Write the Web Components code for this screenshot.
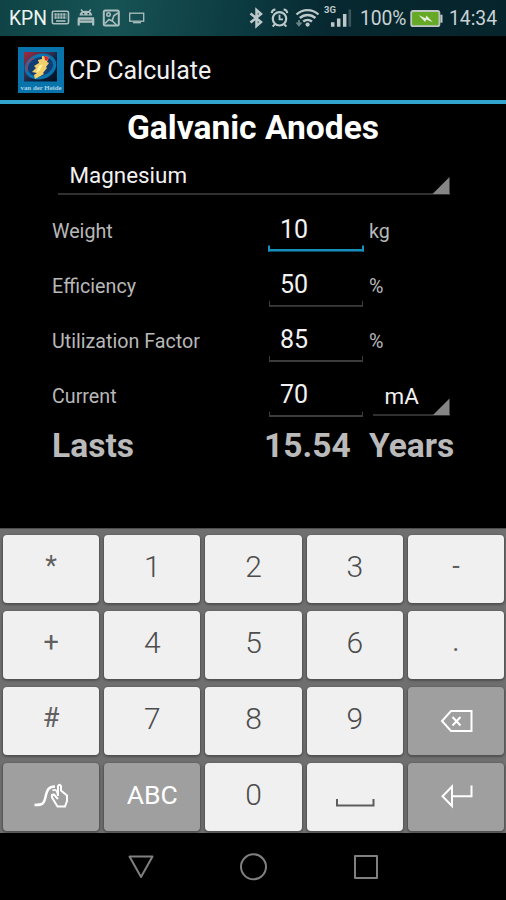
<!DOCTYPE html>
<html lang="en">
<head>
<meta charset="utf-8">
<title>CP Calculate</title>
<style>
    body {
        margin: 0;
        background-color: black;
        font-family: Roboto, "Liberation Sans", sans-serif;
    }
</style>
</head>
<body>
<calc-app></calc-app>

<script>
class StatusBar extends HTMLElement {
    constructor() {
        super();
        this.shadowDOM = this.attachShadow({mode: "open"});
    }

    connectedCallback() {
        this.shadowDOM.innerHTML = `
            <style>
                :host {
                    display: flex;
                    justify-content: space-between;
                    height: 36px;
                    line-height: 38px;
                    font-size: 19.3px;
                    color: #c9d2d4;
                    background: linear-gradient(100deg, #0f4345 0%, #175355 22%, #0c3a41 48%, #072830 65%, #06242b 100%);
                }

                div {
                    display: flex;
                }

                svg {
                    display: block;
                    height: 36px;
                }

                .left {
                    padding-left: 9px;
                }

                .right {
                    padding-right: 8px;
                }

                .carrier {
                    width: 41px;
                    color: #eef3f3;
                }

                .percent {
                    width: 49px;
                    letter-spacing: -.1px;
                }

                .clock {
                    width: 49px;
                }
            </style>

            <div class="left">
                <span class="carrier">KPN</span>
                <svg width="100" viewBox="50 0 100 36" fill="none" stroke="#aebfc0" stroke-width="1.6">
                    <rect x="52.3" y="11.3" width="16.2" height="12.4" rx="1.500"/>
                    <path d="M54.500 14.500h12M54.500 17.500h12" stroke-width="2.300" stroke-dasharray="2.200 .7"/>
                    <path d="M56 21h9.500" stroke-width="1.600"/>
                    <path d="M79.500 15.500q0-4.800 6.300-4.800t6.300 4.800z" fill="#aebfc0" stroke="none"/>
                    <path d="M81 9.500l2.500 3M90.800 9.500l-2.500 3" stroke-width="1.500"/>
                    <path d="M82.700 13.700h1.600M87.500 13.700h1.600" stroke="#17494c" stroke-width="1.500"/>
                    <path d="M78.700 18.500v7M93.200 18.500v7" stroke-width="2.200"/>
                    <path d="M78 17.300h16v5.500H78z" fill="#aebfc0" stroke="none"/>
                    <path d="M80 20.200h12" stroke="#41696b" stroke-width=".8"/>
                    <rect x="103.800" y="10.500" width="15" height="15" rx="1.500" stroke-width="2"/>
                    <circle cx="108.500" cy="14.500" r="1.700"/>
                    <path d="M105 23.500l4-4 3 1.500 2-5.500 4-2.500M112 20.500l4.500 4.500"/>
                    <rect x="129.700" y="13.200" width="14" height="8" stroke-width="1.300"/>
                    <path d="M133 22.700h8" stroke-width="1.300"/>
                </svg>
            </div>
            <div class="right">
                <svg width="112" viewBox="248 0 112 36" fill="none" stroke="#bdc8ca" stroke-width="2">
                    <path d="M250.500 13.500l10.500 8.500-4.500 4V10l4.500 4-10.500 8.500" stroke-width="2.500"/>
                    <circle cx="279.500" cy="18.800" r="6.700" stroke-width="2.200"/>
                    <path d="M279.500 14.800v4.500h3.500" stroke-width="1.800"/>
                    <path d="M271.700 13.200q.4-3.400 3.700-3.600M287.300 13.200q-.4-3.400-3.700-3.600M275 24.300l-2.400 2.200M284 24.300l2.400 2.200" stroke-width="2"/>
                    <path d="M296.500 14.500a16 16 0 0 1 22 0M299.800 18a11.500 11.500 0 0 1 15.600 0M303.200 21.500a6.800 6.800 0 0 1 8.800 0" stroke-width="2.400"/>
                    <circle cx="307.600" cy="24.600" r="2.100" fill="#bdc8ca" stroke="none"/>
                    <path d="M299 20v5M296.500 22.500l2.500 2.900 2.500-2.900" stroke="#6c8489" stroke-width="1.800"/>
                    <text x="324" y="13.400" font-size="9.500" font-weight="bold" fill="#bdc8ca" stroke="none">3G</text>
                    <path d="M332.700 22.300v4.400M338.700 18.600v8.100M344.700 14v12.700" stroke-width="3.500"/>
                    <path d="M349.800 9.500v17.200" stroke="#3b555c" stroke-width="2.600"/>
                </svg>
                <span class="percent">100%</span>
                <svg width="40" viewBox="409 0 40 36">
                    <rect x="411.200" y="11" width="28.200" height="15.200" rx="2" fill="#65a927" stroke="#bdc6c4" stroke-width="1.800"/>
                    <path d="M441.400 14.700v8" stroke="#bdc6c4" stroke-width="2.200"/>
                    <path d="M418.500 15l7 3.200 1-2.700 6.300 6.700-6.500-2.700-1.200 2.600z" fill="#e6eddc"/>
                </svg>
                <span class="clock">14:34</span>
            </div>
        `;
    }
}

class ActionBar extends HTMLElement {
    constructor() {
        super();
        this.shadowDOM = this.attachShadow({mode: "open"});
    }

    connectedCallback() {
        this.shadowDOM.innerHTML = `
            <style>
                :host {
                    display: flex;
                    box-sizing: border-box;
                    height: 68px;
                    padding: 10.5px 0 0 18px;
                    border-bottom: 4px solid #32a5ce;
                    color: #f0f0f0;
                    font-size: 25px;
                    line-height: 48px;
                }

                svg {
                    width: 46px;
                    height: 46px;
                    margin-right: 5px;
                }
            </style>

            <svg viewBox="0 0 46 46">
                <defs>
                    <linearGradient id="sky" x1="0" y1="0" x2="1" y2="1">
                        <stop offset="0" stop-color="#a5283c"/>
                        <stop offset=".42" stop-color="#35304f"/>
                        <stop offset=".6" stop-color="#0b2344"/>
                        <stop offset="1" stop-color="#05101f"/>
                    </linearGradient>
                </defs>
                <rect width="46" height="46" fill="#0874ab"/>
                <rect x="6" y="5" width="33" height="29.5" fill="url(#sky)"/>
                <ellipse cx="22.5" cy="19.500" rx="14.500" ry="11" fill="#123e73" stroke="#0875b0" stroke-width="3.200" transform="rotate(-18 22.500 19.500)"/>
                <path d="M9 24q-2-9 7-13" fill="none" stroke="#8f4560" stroke-width="1.500"/>
                <path d="M24 9l7 1-2 5 2 1-3 4 1 1-4 5 1 1-9 5-1-4 3-2-5-1 4-4-2-2 5-3-1-3 4-1z" fill="#f2d16b"/>
                <path d="M26 9l5 1-2 4-2-1z" fill="#d92b2e"/>
                <path d="M21 19l4-2-3 6-4 3z" fill="#fff0aa"/>
                <text x="2.500" y="42.700" textLength="41" lengthAdjust="spacingAndGlyphs" font-family="Liberation Serif, serif" font-size="7" font-weight="bold" fill="#a9d3e7">van der Heide</text>
            </svg>
            <slot></slot>
        `;
    }
}

class SpinnerBox extends HTMLElement {
    constructor() {
        super();
        this.shadowDOM = this.attachShadow({mode: "open"});
    }

    connectedCallback() {
        this.shadowDOM.innerHTML = `
            <style>
                :host {
                    display: flex;
                    justify-content: space-between;
                    align-items: flex-end;
                    box-sizing: border-box;
                    color: #f2f2f2;
                    font-size: 22.4px;
                    border-bottom: 2px solid #303030;
                }

                span {
                    padding-left: 12px;
                    line-height: 36px;
                }

                i {
                    width: 17px;
                    height: 17px;
                    margin-bottom: -1px;
                    background-color: #858585;
                    clip-path: polygon(100% 0, 100% 100%, 0 100%);
                }
            </style>

            <span><slot></slot></span>
            <i></i>
        `;
    }
}

class FieldRow extends HTMLElement {
    constructor() {
        super();
        this.shadowDOM = this.attachShadow({mode: "open"});
    }

    connectedCallback() {
        this.shadowDOM.innerHTML = `
            <style>
                :host {
                    display: grid;
                    grid-template-columns: 216px 96px 1fr;
                    height: 55.3px;
                    color: #b8b8b8;
                    font-size: 19.7px;
                    line-height: 55px;
                    --line: #3c3c3c;
                }

                :host([focused]) {
                    --line: #168fbd;
                }

                .field {
                    display: flex;
                    flex-direction: column;
                    height: 48.5px;
                }

                .value {
                    height: 40.5px;
                    padding-left: 12px;
                    line-height: 52px;
                    font-size: 25px;
                    color: #f2f2f2;
                }

                .line {
                    height: 7.5px;
                    box-sizing: border-box;
                    margin: 0 1px;
                    border: 1.5px solid var(--line);
                    border-top: 0;
                    border-bottom-width: 2px;
                    clip-path: inset(1.5px 0 0 0);
                }

                :host([focused]) .line {
                    margin: 0;
                    border-width: 0 2px 3px;
                }

                .unit {
                    padding-left: 5px;
                }
            </style>

            <span>${this.getAttribute("label")}</span>
            <div class="field">
                <div class="value">${this.getAttribute("value")}</div>
                <div class="line"></div>
            </div>
            <div class="unit"><slot></slot></div>
        `;
    }
}

class CalcForm extends HTMLElement {
    constructor() {
        super();
        this.shadowDOM = this.attachShadow({mode: "open"});
    }

    connectedCallback() {
        this.shadowDOM.innerHTML = `
            <style>
                :host {
                    display: block;
                    box-sizing: border-box;
                    height: 424px;
                    padding-left: 52px;
                }

                h1 {
                    height: 48px;
                    margin: 0 0 0 -52px;
                    font-size: 33.6px;
                    line-height: 47px;
                    text-align: center;
                    color: white;
                }

                .anode {
                    width: 392px;
                    height: 43px;
                    margin: 0 0 8.5px 5.5px;
                }

                .ampere {
                    width: 77px;
                    height: 41px;
                    margin: 6px 0 0 3.5px;
                }

                .result {
                    display: grid;
                    grid-template-columns: 212px 105px 1fr;
                    font-size: 33.6px;
                    font-weight: bold;
                    line-height: 42px;
                    color: #bababa;
                }
            </style>

            <h1>Galvanic Anodes</h1>
            <spinner-box class="anode">Magnesium</spinner-box>
            <field-row label="Weight" value="10" focused>kg</field-row>
            <field-row label="Efficiency" value="50">%</field-row>
            <field-row label="Utilization Factor" value="85">%</field-row>
            <field-row label="Current" value="70"><spinner-box class="ampere">mA</spinner-box></field-row>
            <div class="result">
                <span>Lasts</span>
                <span>15.54</span>
                <span>Years</span>
            </div>
        `;
    }
}

class KeyButton extends HTMLElement {
    constructor() {
        super();
        this.shadowDOM = this.attachShadow({mode: "open"});
    }

    connectedCallback() {
        this.shadowDOM.innerHTML = `
            <style>
                :host {
                    display: flex;
                    justify-content: center;
                    height: 67.5px;
                    border-radius: 4px;
                    background-color: #f0f0f0;
                    box-shadow: 0 1px 2px 1px #515151;
                    color: #4c4c4c;
                    font-size: 30px;
                    font-weight: 300;
                    line-height: 64px;
                }

                :host([symbol]) {
                    color: #606060;
                    font-size: 27px;
                    font-weight: 400;
                    line-height: 62px;
                }

                :host([dark]) {
                    background-color: #9f9f9f;
                    color: white;
                    font-size: 26.5px;
                    font-weight: 400;
                }
            </style>

            <slot></slot>
        `;
    }
}

class NumberKeyboard extends HTMLElement {
    constructor() {
        super();
        this.shadowDOM = this.attachShadow({mode: "open"});
    }

    connectedCallback() {
        this.shadowDOM.innerHTML = `
            <style>
                :host {
                    display: grid;
                    grid-template-columns: repeat(5, 1fr);
                    gap: 8.5px 5px;
                    align-content: start;
                    box-sizing: border-box;
                    height: 305px;
                    padding: 6px 2px 0 3px;
                    background-color: #6f6f6f;
                    border-top: 1px solid #4c4c4c;
                    overflow: hidden;
                }

                svg {
                    width: 96px;
                    height: 67px;
                    fill: none;
                    stroke: white;
                    stroke-width: 2;
                }

                .space {
                    stroke: #5c5c5c;
                }
            </style>

            <key-button symbol>*</key-button>
            <key-button>1</key-button>
            <key-button>2</key-button>
            <key-button>3</key-button>
            <key-button symbol>-</key-button>
            <key-button symbol>+</key-button>
            <key-button>4</key-button>
            <key-button>5</key-button>
            <key-button>6</key-button>
            <key-button symbol>.</key-button>
            <key-button symbol>#</key-button>
            <key-button>7</key-button>
            <key-button>8</key-button>
            <key-button>9</key-button>
            <key-button dark>
                <svg viewBox="0 0 96 67"><path d="M43 24h20.500v20H43l-9-10zM44.500 30l8 8.500M52.500 30l-8 8.500"/></svg>
            </key-button>
            <key-button dark>
                <svg viewBox="0 0 96 67">
                    <path d="M31.500 42c8 0 9.500-1 11-8s3-10.500 9.500-10.500" stroke-width="2.500"/>
                    <path d="M49.500 27.500q3-1.500 4.300 1l1.200 4" stroke-width="1.700"/>
                    <path d="M55 33v-10q1.500-2.500 3 0v4.500l6 5v5.500l-2 5.500h-7.500l-5.500-9v-2.500l1.800-.5 4.200 4.500" stroke-width="2"/>
                </svg>
            </key-button>
            <key-button dark>ABC</key-button>
            <key-button>0</key-button>
            <key-button>
                <svg class="space" viewBox="0 0 96 67"><path d="M30 36v6.500h36.500v-6.500"/></svg>
            </key-button>
            <key-button dark>
                <svg viewBox="0 0 96 67"><path d="M44 23.500v19.500l-9.500-9.800zM44 33.200h19.500V22.500"/></svg>
            </key-button>
        `;
    }
}

class NavBar extends HTMLElement {
    constructor() {
        super();
        this.shadowDOM = this.attachShadow({mode: "open"});
    }

    connectedCallback() {
        this.shadowDOM.innerHTML = `
            <style>
                :host {
                    display: flex;
                    justify-content: center;
                    gap: 84.5px;
                    height: 67px;
                }

                svg {
                    width: 28px;
                    height: 67px;
                    fill: none;
                    stroke: #808080;
                    stroke-width: 2;
                    stroke-linejoin: round;
                }
            </style>

            <svg viewBox="0 0 28 67"><path d="M2.500 23.500h23L14 44z"/></svg>
            <svg viewBox="0 0 28 67"><circle cx="14.500" cy="33.800" r="12.500"/></svg>
            <svg viewBox="0 0 28 67"><rect x="3" y="23" width="22" height="22"/></svg>
        `;
    }
}

class CalcApp extends HTMLElement {
    constructor() {
        super();
        this.shadowDOM = this.attachShadow({mode: "open"});
    }

    connectedCallback() {
        this.shadowDOM.innerHTML = `
            <style>
                :host {
                    display: flex;
                    flex-direction: column;
                    width: 506px;
                    height: 900px;
                    overflow: hidden;
                }
            </style>

            <status-bar></status-bar>
            <action-bar>CP Calculate</action-bar>
            <calc-form></calc-form>
            <number-keyboard></number-keyboard>
            <nav-bar></nav-bar>
        `;
    }
}

customElements.define("status-bar", StatusBar);
customElements.define("action-bar", ActionBar);
customElements.define("spinner-box", SpinnerBox);
customElements.define("field-row", FieldRow);
customElements.define("calc-form", CalcForm);
customElements.define("key-button", KeyButton);
customElements.define("number-keyboard", NumberKeyboard);
customElements.define("nav-bar", NavBar);
customElements.define("calc-app", CalcApp);
</script>
</body>
</html>
